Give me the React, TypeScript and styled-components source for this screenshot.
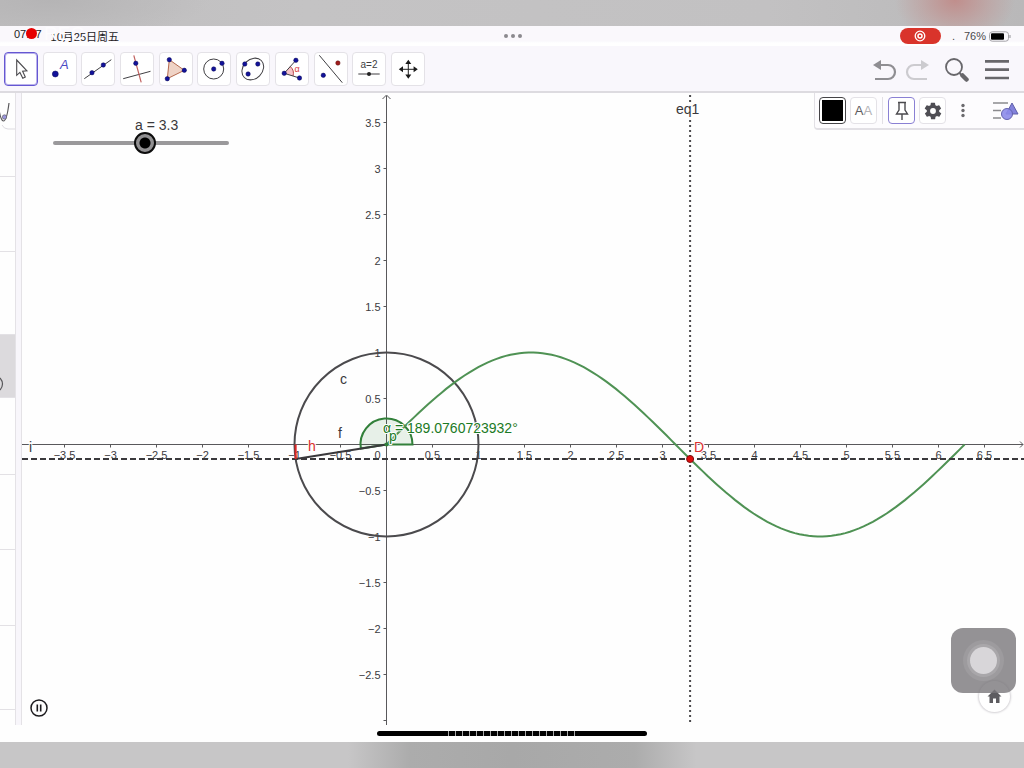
import React, { useState } from "react";
import styled, { createGlobalStyle, css } from "styled-components";

const GlobalStyle = createGlobalStyle`
  * { box-sizing: border-box; }
  body {
    margin: 0;
    font-family: "Liberation Sans", "Noto Sans CJK SC", sans-serif;
    color: #2b2a2d;
    background: #fff;
  }
  button { font: inherit; padding: 0; border: 0; background: none; cursor: pointer; }
`;

const Page = styled.div`
  display: flex;
  flex-direction: column;
  min-height: 100vh;
  overflow: hidden;
`;

const TopBackdrop = styled.div`
  height: 26px;
  background:
    radial-gradient(60px 46px at 955px 0, #c08e8c, rgba(192, 150, 148, 0.5) 55%, transparent),
    radial-gradient(160px 40px at 50px 0, #b5b4b5, transparent),
    linear-gradient(90deg, #bfbebf, #c4c3c4 30%, #c2c1c2 75%, #b9b8b9);
`;

const BottomBackdrop = styled.div`
  flex: 1;
  min-height: 26px;
  background: linear-gradient(90deg, transparent 34%, #acacac 40%, #a8a8a8 50%, #acacac 62%, transparent 68%), #c7c6c7;
`;

const StatusBar = styled.header`
  position: relative;
  display: grid;
  grid-template-columns: 1fr auto 1fr;
  align-items: center;
  height: 20px;
  padding: 0 13px 0 14px;
  font-size: 11px;
  background: linear-gradient(#faf8fc 15px, #fff 17px);
`;

const Clock = styled.div`
  display: flex;
  gap: 9px;
  color: #1c1b1e;
`;

const RecordingDot = styled.span`
  position: absolute;
  left: 26px;
  top: 2px;
  width: 11px;
  height: 11px;
  border-radius: 50%;
  background: #e60000;
`;

const RecordingLabel = styled.span`
  position: absolute;
  left: 44px;
  top: -2px;
  font-size: 19px;
  line-height: 20px;
  color: #fdfcfe;
`;

const Dots = styled.div`
  display: flex;
  gap: 3px;
  span {
    width: 4px;
    height: 4px;
    border-radius: 50%;
    background: #8b8a8e;
  }
`;

const StatusRight = styled.div`
  display: flex;
  justify-content: flex-end;
  align-items: center;
  color: #4a494c;
`;

const RecordPill = styled.button`
  display: flex;
  align-items: center;
  justify-content: center;
  width: 41px;
  height: 16px;
  margin-right: 11px;
  border-radius: 8px;
  background: #d9342b;
`;

const Signal = styled.span`
  width: 12px;
`;

const Battery = styled.svg`
  margin-left: 3px;
`;

const Toolbar = styled.nav`
  display: flex;
  justify-content: space-between;
  height: 47px;
  padding: 6px 15px 0 4px;
  background: #f9f7fc;
  border-bottom: 2px solid #dddbe0;
`;

const Tools = styled.div`
  display: flex;
  justify-content: space-between;
  width: 421px;
`;

const ToolButton = styled.button<{ $active?: boolean }>`
  width: 34px;
  height: 34px;
  border: 1px solid #e4e2e7;
  border-radius: 4px;
  background: #fff;
  ${(p) =>
    p.$active &&
    css`
      border-color: #6557d2;
      box-shadow: inset 0 0 0 1px rgba(101, 87, 210, 0.45);
    `}
  svg { display: block; }
`;

const Actions = styled.div`
  display: flex;
  align-items: flex-start;
  gap: 8px;
`;

const ActionButton = styled.button<{ $wide?: boolean }>`
  width: 24px;
  height: 34px;
  margin-left: ${(p) => (p.$wide ? 8 : 0)}px;
  svg { display: block; }
`;

const Workspace = styled.main`
  display: flex;
`;

const Sidebar = styled.aside`
  display: flex;
  flex-direction: column;
  width: 15px;
  overflow: hidden;
  background: #fefefe;
`;

const AlgebraRow = styled.div<{ $height: number; $selected?: boolean }>`
  height: ${(p) => p.$height}px;
  border-bottom: 1px solid #e3e1e5;
  background: ${(p) => (p.$selected ? "#dcdadd" : "transparent")};
  svg { display: block; }
`;

const Splitter = styled.div`
  width: 7px;
  background: #f8f6fb;
  border: solid #e4e2e6;
  border-width: 0 1px;
`;

const GraphView = styled.section`
  position: relative;
  flex: 1;
  background: #fefefe;
`;

const Plot = styled.svg`
  display: block;
  width: 100%;
  height: auto;
`;

const SliderBox = styled.label`
  position: absolute;
  left: 31px;
  top: 24px;
  width: 176px;
  font-size: 14px;
  line-height: 16px;
  color: #3a393c;
`;

const SliderName = styled.span`
  display: block;
  padding-left: 82px;
`;

const Slider = styled.input`
  display: block;
  width: 100%;
  height: 20px;
  margin: 0;
  appearance: none;
  background: none;
  &::-webkit-slider-runnable-track {
    height: 4px;
    border-radius: 2px;
    background: #9a999b;
  }
  &::-webkit-slider-thumb {
    appearance: none;
    width: 22px;
    height: 22px;
    margin-top: -9px;
    border: 2px solid #0c0c0c;
    border-radius: 50%;
    background: radial-gradient(circle, #000 5px, #919092 6px);
  }
`;

const StyleBar = styled.div`
  position: absolute;
  top: 0;
  right: 0;
  display: flex;
  align-items: center;
  gap: 4px;
  width: 210px;
  height: 37px;
  padding: 0 5px 0 4px;
  border: solid #e2e0e5;
  border-width: 0 0 2px 1px;
  border-bottom-left-radius: 4px;
  background: #fdfcfe;
`;

const StyleButton = styled.button<{ $border?: string }>`
  display: flex;
  align-items: center;
  justify-content: center;
  width: 27px;
  height: 27px;
  border: 1px solid ${(p) => p.$border ?? "#e4e2e7"};
  border-radius: 4px;
  background: #fff;
  font-size: 13px;
  color: #5d5c60;
  span { color: #b3b2b6; }
`;

const Swatch = styled.i`
  width: 21px;
  height: 21px;
  background: #000;
`;

const Separator = styled.i`
  width: 1px;
  height: 27px;
  margin: 0 1px;
  background: #e2e0e5;
`;

const PlainButton = styled.button<{ $push?: boolean }>`
  width: 27px;
  height: 27px;
  margin-left: ${(p) => (p.$push ? "auto" : "0")};
  svg { display: block; }
`;

const PauseButton = styled.button`
  position: absolute;
  left: 8px;
  bottom: 8px;
  width: 18px;
  height: 18px;
  svg { display: block; }
`;

const HomeButton = styled.button`
  position: absolute;
  right: 14px;
  bottom: 13px;
  width: 31px;
  height: 31px;
  border-radius: 50%;
  background: #fff;
  box-shadow: 0 0 2px 1px #d3d1d5;
  svg { display: block; }
`;

const AssistiveTouch = styled.button`
  position: absolute;
  right: 8px;
  bottom: 32px;
  display: grid;
  place-items: center;
  width: 65px;
  height: 65px;
  border-radius: 12px;
  background: rgba(121, 119, 123, 0.8);
  i {
    width: 27px;
    height: 27px;
    border-radius: 50%;
    background: #d8d6d9;
    box-shadow: 0 0 0 3px #a9a7aa, 0 0 0 7px #9d9b9e;
  }
`;

const Footer = styled.footer`
  display: flex;
  justify-content: center;
  align-items: center;
  height: 17px;
  background: #fefefe;
`;

const HomeIndicator = styled.div`
  width: 270px;
  height: 5px;
  border-radius: 3px;
  background:
    repeating-linear-gradient(90deg, #aaa 0 1px, transparent 1px 7px) 71px 0 / 132px 5px no-repeat,
    #000;
`;

const INK = "#403f43";
const BLUE = "#12129a";
const GREEN = "#32803a";
const GREEN_TEXT = "#1b7a25";

const Dot = ({ x, y, r = 2.2, fill = BLUE }: { x: number; y: number; r?: number; fill?: string }) => (
  <circle cx={x} cy={y} r={r} fill={fill} stroke={fill === BLUE ? "#0a0a55" : "#5e1414"} strokeWidth="0.5" />
);

const tools: { name: string; icon: React.ReactNode }[] = [
  {
    name: "Move",
    icon: (
      <path
        d="M12.7 8V23.3L15.9 20.4L18.8 26.3L21.3 25L18.6 19.2L22.9 18.8Z"
        fill="#fff"
        stroke="#4b4a4e"
        strokeWidth="1.1"
      />
    ),
  },
  {
    name: "Point",
    icon: (
      <>
        <Dot x={12.3} y={22} r={3} />
        <text x="17" y="17" fontSize="13" fontStyle="italic" fill="#4a4ac4">A</text>
      </>
    ),
  },
  {
    name: "Line",
    icon: (
      <>
        <path d="M3.3 26.7L30.3 7.7" stroke={INK} />
        <Dot x={11} y={20.7} />
        <Dot x={22.3} y={13} />
      </>
    ),
  },
  {
    name: "Perpendicular line",
    icon: (
      <>
        <path d="M3.2 26.7L30.5 19.3" stroke={INK} />
        <path d="M13.8 3.3L21.2 30.3" stroke="#c0605e" strokeWidth="1.2" />
        <Dot x={15.8} y={11.3} />
      </>
    ),
  },
  {
    name: "Polygon",
    icon: (
      <>
        <path d="M10.3 7.7L25.3 18.3L8.3 26.7Z" fill="#efd3c6" stroke="#b5694d" />
        <Dot x={10.3} y={7.7} />
        <Dot x={25.3} y={18.3} />
        <Dot x={8.3} y={26.7} />
      </>
    ),
  },
  {
    name: "Circle",
    icon: (
      <>
        <circle cx="16.7" cy="17" r="10" fill="none" stroke={INK} />
        <Dot x={16.7} y={17} />
        <Dot x={25} y={11.3} />
      </>
    ),
  },
  {
    name: "Conic",
    icon: (
      <>
        <ellipse cx="16.8" cy="17" rx="12" ry="9.6" transform="rotate(-45 16.8 17)" fill="none" stroke={INK} />
        <Dot x={8.8} y={12} />
        <Dot x={21.8} y={12} />
        <Dot x={12.1} y={22} />
      </>
    ),
  },
  {
    name: "Angle",
    icon: (
      <>
        <path d="M9.2 21.3L15.3 14.6A9 9 0 0 1 18 24Z" fill="#f6c3c8" />
        <path d="M15.3 14.6A9 9 0 0 1 18 24" fill="none" stroke="#b8464b" />
        <path d="M20.9 8.3L9.2 21.3L24.5 26" fill="none" stroke={INK} />
        <text x="19.5" y="20" fontSize="9" fill="#d8383a">α</text>
        <Dot x={9.2} y={21.3} />
        <Dot x={20.9} y={8.3} />
        <Dot x={24.5} y={26} />
      </>
    ),
  },
  {
    name: "Reflect",
    icon: (
      <>
        <path d="M5.3 3.3L28.3 30.7" stroke={INK} />
        <Dot x={9.3} y={23.3} />
        <Dot x={23.9} y={11} fill="#a01c1c" />
      </>
    ),
  },
  {
    name: "Slider",
    icon: (
      <>
        <text x="17" y="16" fontSize="10" textAnchor="middle" fill={INK}>a=2</text>
        <path d="M6.3 22H27.7" stroke={INK} />
        <circle cx="17" cy="22" r="2" fill="#222" />
      </>
    ),
  },
  {
    name: "Move view",
    icon: (
      <>
        <path d="M17.3 10V25M10 17.3H25" stroke="#222" />
        <path
          d="M17.3 7.8L20.3 12H14.3ZM17.3 26.8L20.3 22.6H14.3ZM7.8 17.3L12 14.3V20.3ZM26.8 17.3L22.6 14.3V20.3Z"
          fill="#1a1a1a"
        />
      </>
    ),
  },
];

// Plot geometry: the origin and the number of units of the drawing per graph unit.
const OX = 364.5;
const OY = 351.5;
const UNIT = 92;
const px = (x: number) => OX + x * UNIT;
const py = (y: number) => OY - y * UNIT;
const range = (from: number, to: number) =>
  Array.from({ length: Math.round((to - from) * 2) + 1 }, (_, i) => from + i / 2).filter((v) => v !== 0);
const format = (v: number) => (v < 0 ? `−${-v}` : `${v}`);

const Halo = styled.text`
  paint-order: stroke;
  stroke: #fefefe;
  stroke-width: 2px;
  stroke-linejoin: round;
`;

const sine = Array.from({ length: 127 }, (_, i) => {
  const t = (i / 126) * 2 * Math.PI;
  return `${px(t).toFixed(1)},${py(Math.sin(t)).toFixed(1)}`;
}).join(" ");

const Graph = ({ a }: { a: number }) => {
  const cx = px(Math.cos(a));
  const cy = py(Math.sin(a));
  const ax = OX + 26 * Math.cos(a);
  const ay = OY - 26 * Math.sin(a);
  const sector = `M${OX} ${OY}H${OX + 26}A26 26 0 ${a > Math.PI ? 1 : 0} 0 ${ax} ${ay}Z`;
  return (
    <Plot viewBox="0 0 1002 632" role="img" aria-label="Unit circle and sine curve">
      <path d={`M0 ${OY}H1001M${OX} 3V632`} stroke="#59585b" fill="none" />
      <path d={`M998 ${OY - 3}L1001 ${OY}L998 ${OY + 3}M${OX - 4} 6L${OX} 2L${OX + 4} 6`} stroke="#59585b" fill="none" />
      {range(-3.5, 6.5).map((v) => (
        <path key={v} d={`M${px(v)} ${OY}v3`} stroke="#59585b" />
      ))}
      {range(-3, 3.5).map((v) => (
        <path key={v} d={`M${OX} ${py(v)}h-3`} stroke="#59585b" />
      ))}
      <g fontSize="11" fill="#3c3b3e">
        {range(-3.5, 6.5).map((v) => (
          <Halo key={v} x={px(v)} y={OY + 14} textAnchor="middle">{format(v)}</Halo>
        ))}
        <Halo x={OX - 6} y={OY + 14} textAnchor="end">0</Halo>
        {range(-2.5, 3.5).map((v) => (
          <Halo key={v} x={OX - 6} y={py(v) + 4} textAnchor="end">{format(v)}</Halo>
        ))}
      </g>
      <circle cx={OX} cy={OY} r={UNIT} fill="none" stroke="#4b4a4d" strokeWidth="2" />
      <path d={sector} fill="#1b7a25" fillOpacity="0.1" stroke={GREEN} strokeWidth="2" />
      <polyline points={sine} fill="none" stroke="#4f9254" strokeWidth="2" />
      <path d={`M0 ${cy}H1002`} stroke="#3a393c" strokeWidth="2" strokeDasharray="6 3" />
      <path d={`M${px(a)} 2V632`} stroke="#4b4a4d" strokeWidth="2" strokeDasharray="2 3" />
      <path d={`M${OX} ${OY}L${cx} ${cy}`} stroke="#3a393c" strokeWidth="2" />
      <path d={`M${cx} ${OY}V${cy}`} stroke="#e02525" strokeWidth="2" />
      <circle cx={OX} cy={OY} r="2" fill={GREEN} />
      <circle cx={px(a)} cy={cy} r="3.5" fill="#e00b0b" stroke="#7c1010" />
      <g fontSize="14" fill="#3a393c">
        <Halo x="654" y="21">eq1</Halo>
        <Halo x="318" y="291">c</Halo>
        <Halo x="316" y="345">f</Halo>
        <Halo x="7" y="359">i</Halo>
        <Halo x="286" y="358" fill="#dc2f2f">h</Halo>
        <Halo x="672" y="359" fill="#dc2f2f">D</Halo>
        <Halo x="361" y="340" fill={GREEN_TEXT}>α = 189.0760723932°</Halo>
        <Halo x="367" y="348" fill={GREEN_TEXT}>p</Halo>
      </g>
    </Plot>
  );
};

const algebraRows = [
  { height: 84, mark: "M-2 10C1 34 6 34 9 10" },
  { height: 75 },
  { height: 83 },
  { height: 63, selected: true, mark: "M0 43Q5 49 0 55" },
  { height: 77 },
  { height: 75 },
  { height: 76 },
  { height: 84 },
];

export default function App() {
  const [a, setA] = useState(3.3);
  return (
    <Page>
      <GlobalStyle />
      <TopBackdrop />
      <StatusBar>
        <Clock>
          <span>07:27</span>
          <span>10月25日周五</span>
        </Clock>
        <Dots><span /><span /><span /></Dots>
        <StatusRight>
          <RecordPill aria-label="Screen recording">
            <svg width="12" height="12" viewBox="0 0 12 12">
              <circle cx="6" cy="6" r="4.8" fill="none" stroke="#fff" strokeWidth="1.3" />
              <circle cx="6" cy="6" r="2" fill="none" stroke="#fff" strokeWidth="1.5" />
            </svg>
          </RecordPill>
          <Signal>.</Signal>
          <span>76%</span>
          <Battery width="22" height="11" viewBox="0 0 22 11">
            <rect x="0.5" y="0.8" width="19" height="9.4" rx="2.8" fill="none" stroke="#a5a4a8" />
            <rect x="2" y="2.3" width="13" height="6.4" rx="1" fill="#000" />
            <path d="M21 4V7" stroke="#a5a4a8" strokeWidth="1.2" />
          </Battery>
        </StatusRight>
        <RecordingLabel>REC</RecordingLabel>
        <RecordingDot />
      </StatusBar>

      <Toolbar>
        <Tools>
          {tools.map((tool, i) => (
            <ToolButton key={tool.name} $active={i === 0} aria-label={tool.name}>
              <svg width="32" height="32" viewBox="1 1 32 32">{tool.icon}</svg>
            </ToolButton>
          ))}
        </Tools>
        <Actions>
          <ActionButton aria-label="Undo">
            <svg width="24" height="34" viewBox="0 0 24 34" fill="none">
              <path d="M7 13H15A7 7 0 0 1 15 27H2" stroke="#8f8e92" strokeWidth="2.2" />
              <path d="M0 13L8 8V18Z" fill="#8f8e92" />
            </svg>
          </ActionButton>
          <ActionButton aria-label="Redo">
            <svg width="24" height="34" viewBox="0 0 24 34" fill="none">
              <path d="M17 13H9A7 7 0 0 0 9 27H22" stroke="#cccbcf" strokeWidth="2.2" />
              <path d="M24 13L16 8V18Z" fill="#cccbcf" />
            </svg>
          </ActionButton>
          <ActionButton $wide aria-label="Search">
            <svg width="24" height="34" viewBox="0 0 24 34" fill="none">
              <circle cx="9" cy="15" r="8" stroke="#68676b" strokeWidth="1.8" />
              <path d="M14.5 21L18 24.5" stroke="#68676b" strokeWidth="2" />
              <path d="M17.5 23.5L21.5 27.5" stroke="#68676b" strokeWidth="4.5" strokeLinecap="round" />
            </svg>
          </ActionButton>
          <ActionButton $wide aria-label="Menu">
            <svg width="24" height="34" viewBox="0 0 24 34">
              <path d="M0 9.3H24M0 17.6H24M0 26H24" stroke="#68676b" strokeWidth="2.7" />
            </svg>
          </ActionButton>
        </Actions>
      </Toolbar>

      <Workspace>
        <Sidebar aria-label="Algebra">
          {algebraRows.map((row, i) => (
            <AlgebraRow key={i} $height={row.height} $selected={row.selected}>
              {row.mark && (
                <svg width="16" height="60" viewBox="0 0 16 60" fill="none">
                  <path d={row.mark} stroke="#59585b" strokeWidth="1.2" />
                  {i === 0 && <circle cx="4.5" cy="24" r="2.2" fill="#9a95dc" stroke="#59585b" strokeWidth="0.6" />}
                  {i === 0 && <path d="M2 32Q4 36 8 36H16" stroke="#dddbe0" />}
                </svg>
              )}
            </AlgebraRow>
          ))}
        </Sidebar>
        <Splitter />
        <GraphView aria-label="Graphics">
          <Graph a={a} />
          <SliderBox>
            <SliderName>a = {a}</SliderName>
            <Slider
              type="range"
              min="0"
              max="6.3"
              step="0.1"
              value={a}
              onChange={(e) => setA(Number(e.target.value))}
            />
          </SliderBox>
          <StyleBar>
            <StyleButton $border="#454447" aria-label="Colour"><Swatch /></StyleButton>
            <StyleButton aria-label="Label style">A<span>A</span></StyleButton>
            <Separator />
            <StyleButton $border="#8a80d4" aria-label="Pin">
              <svg width="14" height="20" viewBox="0 0 14 20" fill="none" stroke="#4b4a4e" strokeWidth="1.4">
                <path d="M3 1.5H11M4 1.5V9L1.5 13H12.5L10 9V1.5M7 13V19" />
              </svg>
            </StyleButton>
            <StyleButton aria-label="Settings">
              <svg width="20" height="20" viewBox="0 0 24 24" fill="#4f4e54">
                <path d="M19.4 13a7.5 7.5 0 0 0 0-2l2.1-1.6a.5.5 0 0 0 .1-.7l-2-3.4a.5.5 0 0 0-.6-.2l-2.5 1a7.3 7.3 0 0 0-1.7-1l-.4-2.7a.5.5 0 0 0-.5-.4h-4a.5.5 0 0 0-.5.4l-.4 2.7a7.7 7.7 0 0 0-1.7 1l-2.5-1a.5.5 0 0 0-.6.2l-2 3.4a.5.5 0 0 0 .1.7L4.6 11a8 8 0 0 0 0 2l-2.1 1.6a.5.5 0 0 0-.1.7l2 3.4c.1.2.4.3.6.2l2.5-1c.5.4 1.1.7 1.7 1l.4 2.7c0 .2.2.4.5.4h4c.2 0 .5-.2.5-.4l.4-2.7c.6-.3 1.2-.6 1.7-1l2.5 1c.2.1.5 0 .6-.2l2-3.4a.5.5 0 0 0-.1-.7zM12 15.500a3.500 3.500 0 1 1 0-7 3.500 3.500 0 0 1 0 7z" />
              </svg>
            </StyleButton>
            <PlainButton aria-label="More">
              <svg width="27" height="27" viewBox="0 0 27 27" fill="#6b6a6e">
                <circle cx="13" cy="8.5" r="1.7" />
                <circle cx="13" cy="13.5" r="1.7" />
                <circle cx="13" cy="18.5" r="1.7" />
              </svg>
            </PlainButton>
            <PlainButton $push aria-label="Views">
              <svg width="27" height="27" viewBox="0 0 27 27">
                <path d="M1 6H16M1 13.5H9M1 21H9" stroke="#8b8a8e" strokeWidth="1.6" />
                <path d="M20 6L26 17H14Z" fill="#8382dc" stroke="#5f5ea8" />
                <circle cx="15" cy="17" r="5.5" fill="#8c8bea" fillOpacity="0.9" stroke="#6463ae" />
              </svg>
            </PlainButton>
          </StyleBar>
          <PauseButton aria-label="Pause animation">
            <svg width="18" height="18" viewBox="0 0 18 18" fill="none" stroke="#1c1b1e">
              <circle cx="9" cy="9" r="8" strokeWidth="1.5" />
              <path d="M7.3 5.5V12.5M10.7 5.5V12.5" strokeWidth="1.6" />
            </svg>
          </PauseButton>
          <HomeButton aria-label="Standard view">
            <svg width="31" height="31" viewBox="0 0 31 31">
              <path d="M15.5 8.500L22.500 15.500H20.500V22H17V17.500H14V22H10.500V15.500H8.500Z" fill="#5d5c60" />
            </svg>
          </HomeButton>
          <AssistiveTouch aria-label="AssistiveTouch"><i /></AssistiveTouch>
        </GraphView>
      </Workspace>
      <Footer><HomeIndicator /></Footer>
      <BottomBackdrop />
    </Page>
  );
}
